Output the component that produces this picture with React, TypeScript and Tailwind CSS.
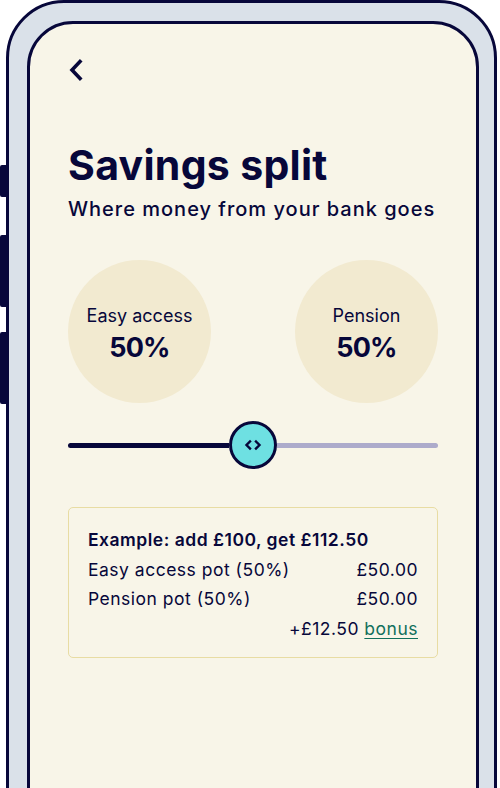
const font = { fontFamily: 'Inter, "Noto Sans", sans-serif' };

export default function App() {
  return (
    <div className="relative h-[788px] w-[500px] overflow-hidden bg-white" style={font}>
      {/* Side buttons */}
      <div className="absolute left-0 top-[165px] h-[32px] w-[7px] rounded-l-[2px] bg-[#07073a]" />
      <div className="absolute left-0 top-[235px] h-[72px] w-[7px] rounded-l-[2px] bg-[#07073a]" />
      <div className="absolute left-0 top-[332px] h-[72px] w-[7px] rounded-l-[2px] bg-[#07073a]" />

      {/* Phone frame */}
      <div className="ml-[6px] h-[900px] w-[491px] rounded-[58px] border-[3px] border-[#07073a] bg-[#dae1e9] pl-[18px] pr-[15px] pt-[18px]">
        <div className="h-[880px] rounded-[46px] border-[3px] border-[#07073a] bg-[#f8f5e8] px-[38px] pt-[34px] text-[#07073a]">
          {/* Back */}
          <svg width="16" height="24" viewBox="0 0 16 24" fill="none" stroke="#07073a" strokeWidth="3.6" strokeLinecap="square" strokeLinejoin="miter">
            <path d="M12 3.5 L4 12 L12 20.5" />
          </svg>

          {/* Heading */}
          <h1 className="mt-[59px] text-[41px] font-bold leading-[48px] tracking-[0.3px]">Savings split</h1>
          <p className="mt-[7px] text-[20px] font-medium leading-[26px] tracking-[1px]">Where money from your bank goes</p>

          {/* Split circles */}
          <div className="mt-[38px] flex justify-between">
            <div className="flex h-[143px] w-[143px] flex-col items-center rounded-full bg-[#f2ead0] pt-[45px]">
              <span className="text-[18px] leading-[22px]">Easy access</span>
              <span className="mt-[6px] text-[27px] font-bold leading-[30px] tracking-[-0.8px]">50%</span>
            </div>
            <div className="flex h-[143px] w-[143px] flex-col items-center rounded-full bg-[#f2ead0] pt-[45px]">
              <span className="text-[18px] leading-[22px]">Pension</span>
              <span className="mt-[6px] text-[27px] font-bold leading-[30px] tracking-[-0.8px]">50%</span>
            </div>
          </div>

          {/* Slider */}
          <div className="mt-[18px] flex h-[48px] items-center">
            <div className="h-[5px] flex-1 rounded-l-full bg-[#07073a]" />
            <div className="flex h-[48px] w-[48px] shrink-0 items-center justify-center rounded-full border-[3px] border-[#07073a] bg-[#6ee0e2]">
              <svg width="18" height="12" viewBox="0 0 18 12" fill="none" stroke="#07073a" strokeWidth="2.4" strokeLinecap="square">
                <path d="M6 2.5 L2.5 6 L6 9.5" />
                <path d="M12 2.5 L15.5 6 L12 9.5" />
              </svg>
            </div>
            <div className="h-[5px] flex-1 rounded-r-full bg-[#adabcb]" />
          </div>

          {/* Example card */}
          <div className="mt-[38px] rounded-[5px] border border-[#e8dca3] px-[19px] pb-[14px] pt-[17px] text-[17.5px] leading-[29.5px] tracking-[0.5px]">
            <p className="font-semibold">Example: add £100, get £112.50</p>
            <div className="flex justify-between">
              <span>Easy access pot (50%)</span>
              <span>£50.00</span>
            </div>
            <div className="flex justify-between">
              <span>Pension pot (50%)</span>
              <span>£50.00</span>
            </div>
            <div className="flex justify-end">
              <span>
                +£12.50 <span className="text-[#11705c] underline underline-offset-[3px]">bonus</span>
              </span>
            </div>
          </div>
        </div>
      </div>
    </div>
  );
}
